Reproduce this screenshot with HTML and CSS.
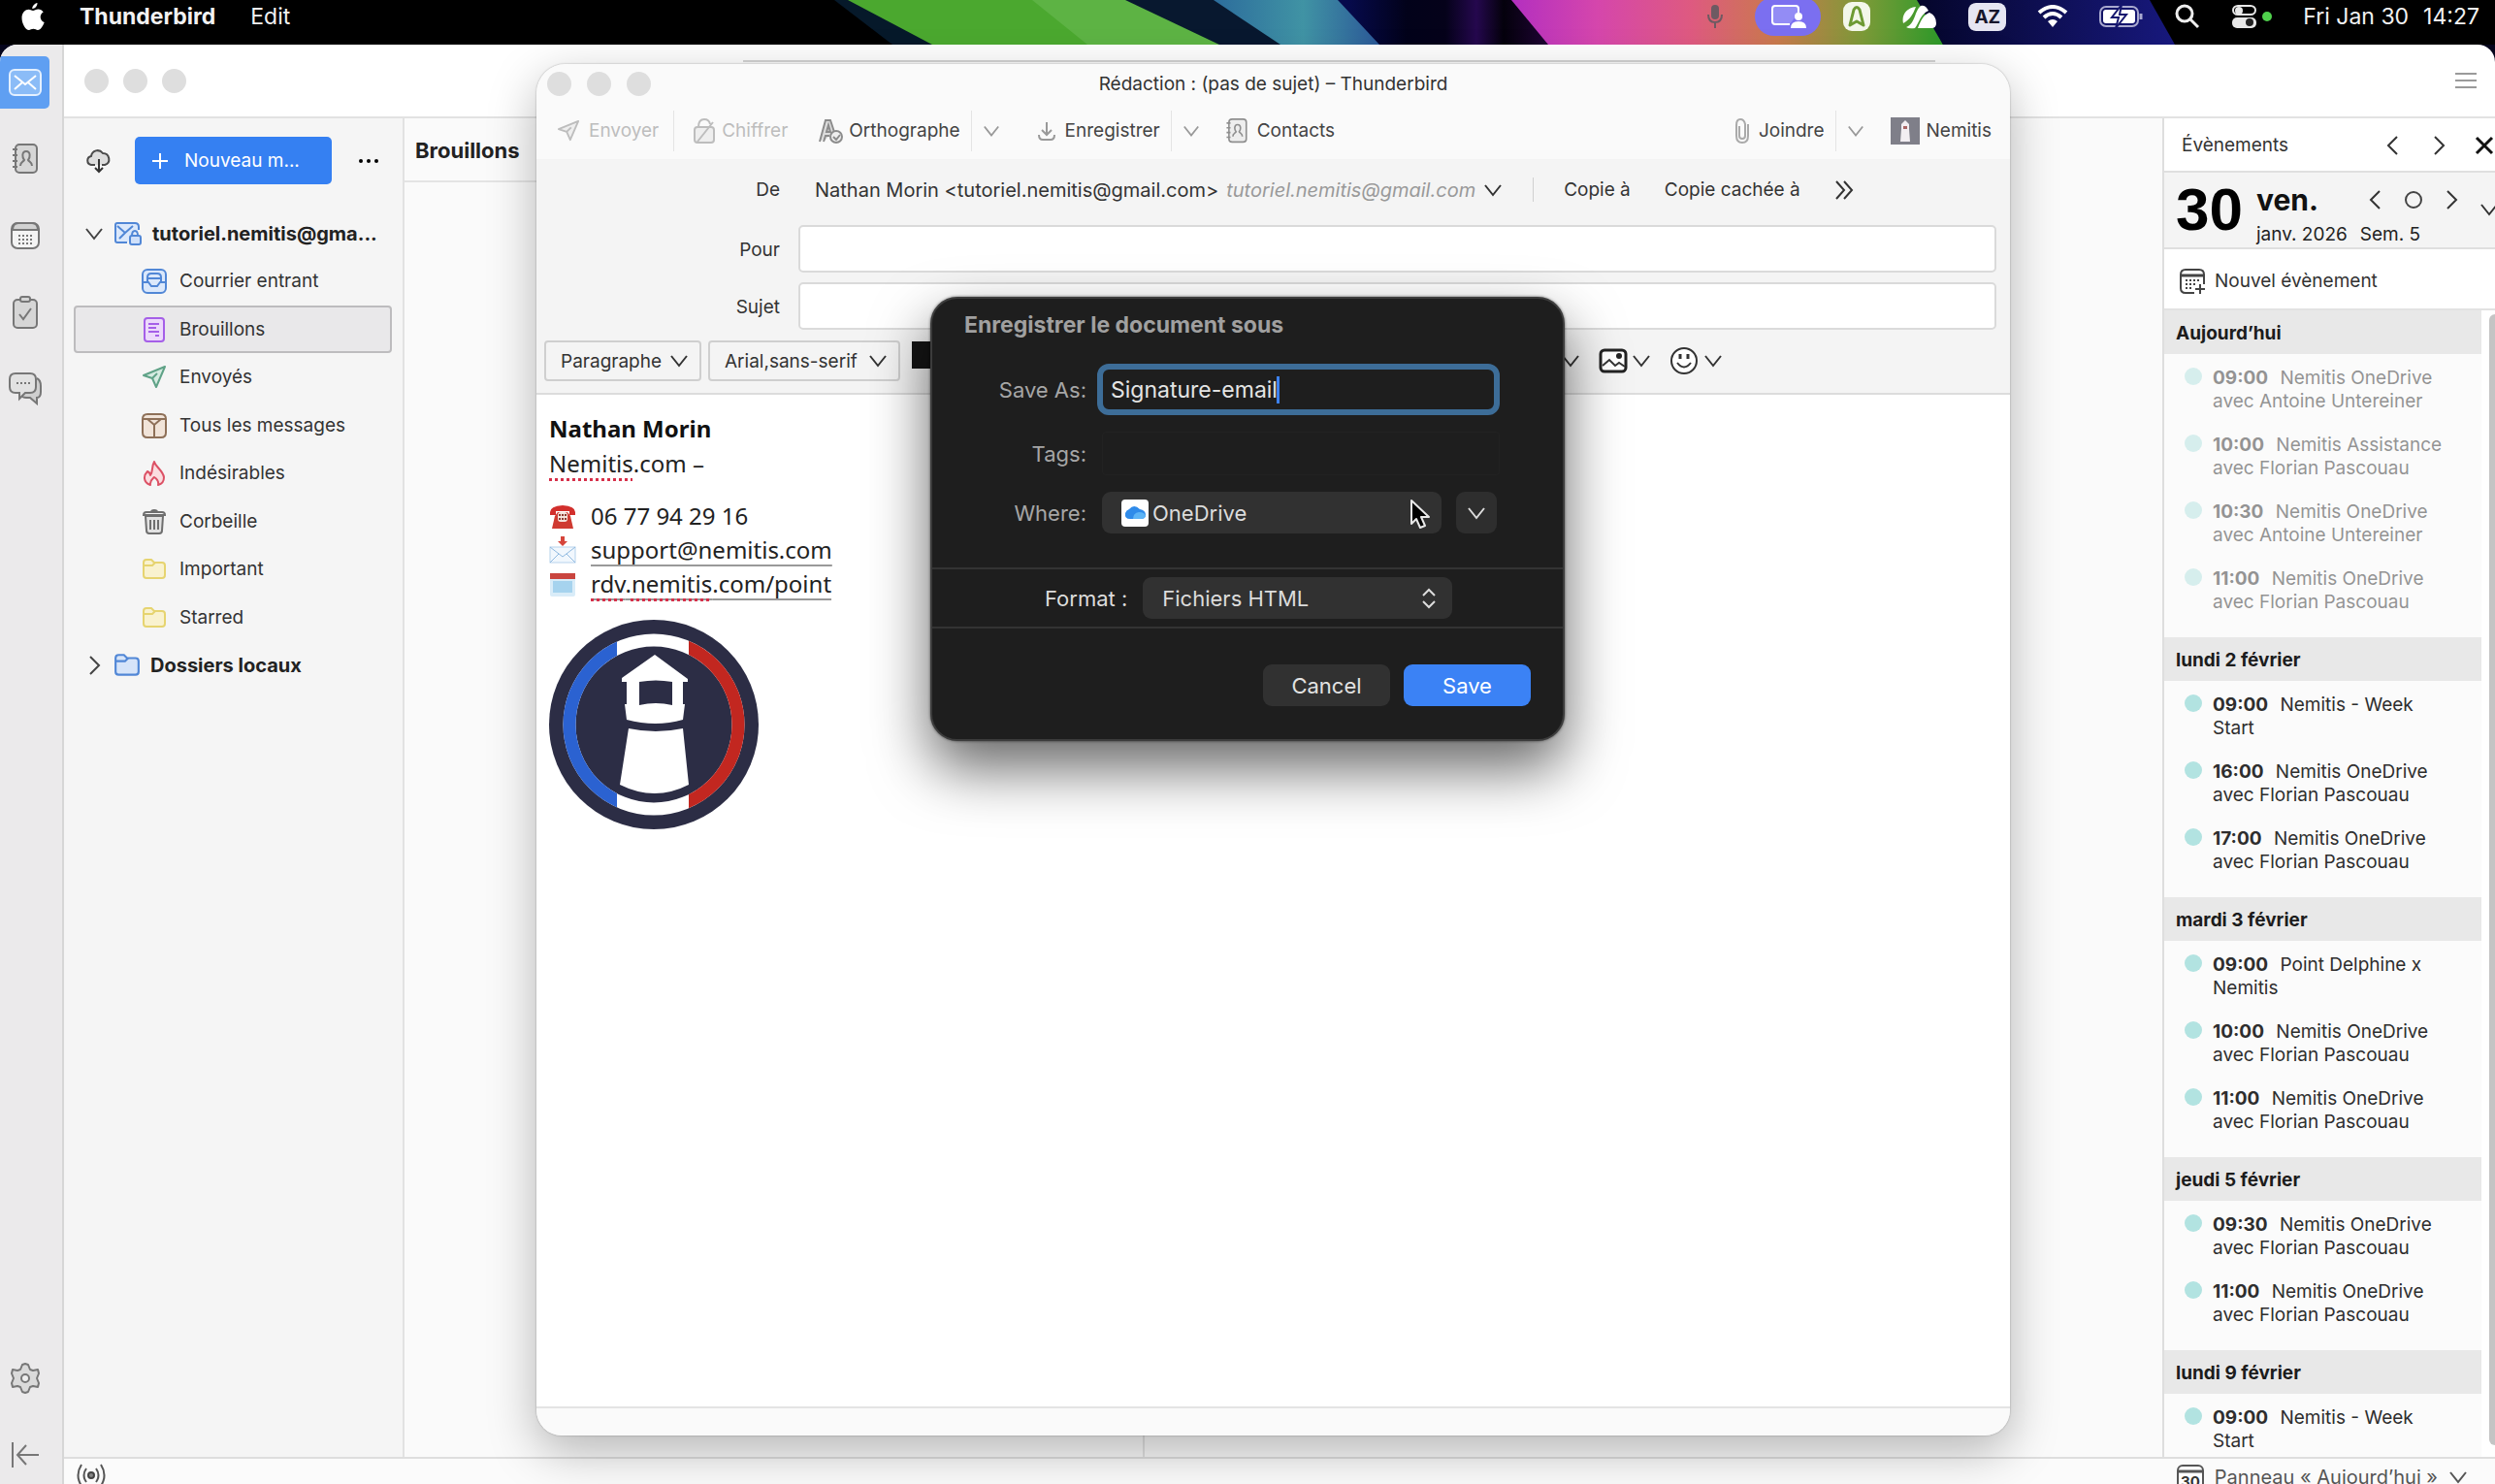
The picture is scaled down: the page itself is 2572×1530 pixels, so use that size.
FILE: index.html
```html
<!DOCTYPE html>
<html lang="fr">
<head>
<meta charset="utf-8">
<title>Rédaction : (pas de sujet) – Thunderbird</title>
<link rel="stylesheet" href="styles.css">
</head>
<body>
<svg class="sprite" aria-hidden="true">
  <symbol id="chev-down" viewBox="0 0 20 20"><path d="M2 5l8 10 8-10" fill="none" stroke="currentColor" stroke-width="2"/></symbol>
  <symbol id="chev-left" viewBox="0 0 20 20"><path d="M14 1L5 10l9 9" fill="none" stroke="currentColor" stroke-width="2"/></symbol>
  <symbol id="chev-right" viewBox="0 0 20 20"><path d="M6 1l9 9-9 9" fill="none" stroke="currentColor" stroke-width="2"/></symbol>
  <symbol id="plane" viewBox="0 0 26 26"><path d="M24 2L2 11l9 3 4 9z" fill="var(--fill)" stroke="currentColor" stroke-width="2" stroke-linejoin="round"/><path d="M11 14l5-5" fill="none" stroke="currentColor" stroke-width="2"/></symbol>
  <symbol id="folder" viewBox="0 0 26 26"><path d="M2 6q0-3 3-3h5l3 3h8q3 0 3 3v10q0 3-3 3H5q-3 0-3-3z" fill="var(--fill)" stroke="currentColor" stroke-width="2"/><path d="M2 9h9l3-3" fill="none" stroke="currentColor" stroke-width="2"/></symbol>
  <symbol id="contact" viewBox="0 0 28 32"><rect x="4" y="1" width="22" height="29" rx="4" fill="var(--fill)" stroke="currentColor" stroke-width="2"/><path d="M1 6h5M1 12h5M1 18h5M1 24h5M9 23c0-4 3-4 4-6-2-2-3-9 2-9s4 7 2 9c1 2 4 2 4 6" fill="none" stroke="currentColor" stroke-width="2"/></symbol>
</svg>

<header class="menubar">
  <svg class="wallpaper" viewBox="0 0 2572 46" preserveAspectRatio="none" aria-hidden="true">
    <defs>
      <linearGradient id="pink" x1="1558" x2="2000" y1="0" y2="0" gradientUnits="userSpaceOnUse">
        <stop offset="0" stop-color="#b32fc0"/><stop offset=".2" stop-color="#d546ac"/><stop offset=".42" stop-color="#de5a80"/><stop offset=".62" stop-color="#c97a4c"/><stop offset=".82" stop-color="#7c9a38"/><stop offset="1" stop-color="#2f9a2a"/>
      </linearGradient>
      <linearGradient id="purple" x1="1390" x2="1590" y1="0" y2="0" gradientUnits="userSpaceOnUse">
        <stop offset="0" stop-color="#060a4c"/><stop offset=".3" stop-color="#02021a"/><stop offset=".5" stop-color="#05021a"/><stop offset=".66" stop-color="#25084e"/><stop offset=".8" stop-color="#04010c"/><stop offset="1" stop-color="#1c0430"/>
      </linearGradient>
      <linearGradient id="teal" x1="1250" x2="1420" y1="0" y2="0" gradientUnits="userSpaceOnUse">
        <stop offset="0" stop-color="#2c6c9c"/><stop offset=".55" stop-color="#4093a4"/><stop offset="1" stop-color="#2c5a98"/>
      </linearGradient>
      <linearGradient id="navy" x1="1980" x2="2240" y1="0" y2="0" gradientUnits="userSpaceOnUse">
        <stop offset="0" stop-color="#05062c"/><stop offset="1" stop-color="#17187c"/>
      </linearGradient>
    </defs>
    <rect width="2572" height="46" fill="#000"/>
    <path d="M860 0h20l90 46h-50z" fill="#06192a"/>
    <path d="M874 0h290l96 46H961z" fill="#4ba82f"/>
    <path d="M1064 0h98l95 46h-136z" fill="#5db344"/>
    <path d="M1160 0h95l70 46h-68z" fill="#08182f"/>
    <path d="M1251 0h130l42 46h-103z" fill="url(#teal)"/>
    <path d="M1379 0h182l38 46h-177z" fill="url(#purple)"/>
    <path d="M1558 0h422l23 46h-407z" fill="url(#pink)"/>
    <path d="M1976 0h240l26 46h-239z" fill="url(#navy)"/>
  </svg>
  <nav class="menubar-left">
    <svg class="apple" viewBox="0 0 24 28"><path d="M16.500 0c.2 3-2.600 6-5.200 6C11 3.500 13.600.5 16.500 0zM12 8c1.300 0 3-1.500 5.500-1.500 2 0 4 1.100 5.200 2.900-4.500 2.600-3.800 8.700 1 10.600C22.500 23.500 19.800 28 17 28c-1.800 0-2.500-1.200-4.600-1.200S9.500 28 7.800 28C4.500 28 .5 21.500.5 15.500c0-6 3.800-8.800 7-8.800 2 0 3.500 1.300 4.500 1.300z" fill="#fff"/></svg>
    <b>Thunderbird</b>
    <span>Edit</span>
  </nav>
  <div class="menubar-right">
    <svg width="18" height="26" viewBox="0 0 18 26"><rect x="5" y="1" width="8" height="15" rx="4" fill="#6d5a62"/><path d="M2 11q0 8 7 8t7-8M9 19v6" fill="none" stroke="#6d5a62" stroke-width="2"/></svg>
    <span class="share-pill"><svg width="38" height="28" viewBox="0 0 38 28"><path d="M21 22H6q-3 0-3-3V6q0-3 3-3h21q3 0 3 3v4" fill="#938cf5" stroke="#fff" stroke-width="2"/><circle cx="30" cy="14" r="4" fill="#fff"/><path d="M22 26q0-7 8-7t8 7z" fill="#fff"/></svg></span>
    <svg width="30" height="30" viewBox="0 0 30 30"><rect x="1" y="0" width="28" height="30" rx="9" fill="#f3f7ea"/><path d="M8 24l4-16q3-5 6 0l4 16-7-4z" fill="none" stroke="#6d9a33" stroke-width="3" stroke-linejoin="round"/></svg>
    <svg width="36" height="26" viewBox="0 0 36 26"><path d="M1 20C-1 12 4 4 14 3 11 11 8 16 1 20zM4 24C14 20 12 8 19 2q5-1 8 5C19 10 17 20 13 25q-6 1-9-1zM16 25c3-8 6-14 12-16q7 3 7 11 0 5-5 5z" fill="#fff"/></svg>
    <span class="az">AZ</span>
    <svg width="32" height="24" viewBox="0 0 32 24"><path d="M2 8q14-12 28 0M7 13q9-8 18 0" fill="none" stroke="#fff" stroke-width="4"/><path d="M11 17q5-4 10 0l-5 6z" fill="#fff"/></svg>
    <svg width="46" height="24" viewBox="0 0 46 24"><rect x="1" y="2" width="39" height="20" rx="6" fill="none" stroke="#a9a9cf" stroke-width="2"/><rect x="4" y="5" width="33" height="14" rx="3" fill="#fff"/><path d="M23 0L13 13h7l-3 11 11-14h-7z" fill="#fff" stroke="#15166e" stroke-width="2"/><path d="M43 9v6" stroke="#a9a9cf" stroke-width="3"/></svg>
    <svg width="26" height="26" viewBox="0 0 26 26"><circle cx="10" cy="10" r="8" fill="none" stroke="#eee" stroke-width="3"/><path d="M16 16l8 8" stroke="#eee" stroke-width="3"/></svg>
    <svg width="42" height="26" viewBox="0 0 42 26"><rect x="2" y="2" width="23" height="9" rx="5" fill="none" stroke="#e8e8e8" stroke-width="2"/><circle cx="8" cy="7" r="4" fill="#e8e8e8"/><rect x="1" y="14" width="25" height="11" rx="5" fill="#e8e8e8"/><circle cx="19" cy="19" r="4" fill="#222"/><circle cx="37" cy="13" r="5" fill="#4fd04c"/></svg>
    <time class="clock"><span>Fri Jan 30</span><span>14:27</span></time>
  </div>
</header>

<main class="mail">
  <nav class="rail">
    <button class="rail-btn active" aria-label="Courrier"><svg width="34" height="28" viewBox="0 0 34 28"><rect x="1" y="1" width="32" height="26" rx="5" fill="#8bbcf7" stroke="#e4f0ff" stroke-width="2"/><path d="M6 7l11 9L28 7M6 21l8-7M28 21l-8-7" fill="none" stroke="#fff" stroke-width="2"/></svg></button>
    <button class="rail-btn" aria-label="Carnet d’adresses"><svg width="28" height="32"><use href="#contact"/></svg></button>
    <button class="rail-btn" aria-label="Agenda"><svg width="30" height="30" viewBox="0 0 30 30"><rect x="1" y="2" width="28" height="26" rx="6" fill="#f4f4f4" stroke="currentColor" stroke-width="2"/><path d="M2 9q0-7 6-7h14q6 0 6 7z" fill="#d2d2d2" stroke="currentColor" stroke-width="2"/><path d="M8 15h15M8 19h15M8 23h15" stroke="currentColor" stroke-width="2" stroke-dasharray="2 2"/></svg></button>
    <button class="rail-btn" aria-label="Tâches"><svg width="26" height="34" viewBox="0 0 26 34"><rect x="1" y="4" width="24" height="29" rx="4" fill="#d6d6d6" stroke="currentColor" stroke-width="2"/><rect x="8" y="1" width="10" height="5" rx="2" fill="#d6d6d6" stroke="currentColor" stroke-width="2"/><path d="M7 19l4 5 8-11" fill="none" stroke="currentColor" stroke-width="2"/></svg></button>
    <button class="rail-btn" aria-label="Messagerie instantanée"><svg width="34" height="34" viewBox="0 0 34 34"><path d="M29 6q4 2 4 8v6q0 6-4 6v6l-7-6h-4q-4 0-6-3" fill="#cfcfcf" stroke="currentColor" stroke-width="2"/><path d="M7 1h15q6 0 6 6v8q0 6-6 6h-5l-6 6v-6H7q-6 0-6-6V7q0-6 6-6z" fill="#e2e2e2" stroke="currentColor" stroke-width="2"/><path d="M8 11h14" stroke="currentColor" stroke-width="2" stroke-dasharray="2 2"/></svg></button>
    <span class="grow"></span>
    <button class="rail-btn" aria-label="Paramètres"><svg width="30" height="32" viewBox="0 0 30 32"><path d="M15 1l3 1 2 5 3 1 5-1 1 4-2 5 2 5-1 4-5-1-3 1-2 5-3 1-3-1-2-5-3-1-5 1-1-4 2-5-2-5 1-4 5 1 3-1 2-5z" fill="#dadada" stroke="currentColor" stroke-width="2" stroke-linejoin="round"/><circle cx="15" cy="16" r="4" fill="#eee" stroke="currentColor" stroke-width="2"/></svg></button>
    <button class="rail-btn" aria-label="Réduire"><svg width="30" height="28" viewBox="0 0 30 28"><path d="M2 1v26M29 14H7M16 4L7 14l9 10" fill="none" stroke="currentColor" stroke-width="2"/></svg></button>
  </nav>

  <div class="titlebar">
    <span class="light"></span><span class="light"></span><span class="light"></span>
    <span class="grow"></span>
    <button class="plain burger" aria-label="Menu"><svg width="22" height="18" viewBox="0 0 22 18"><path d="M0 2h22M0 9h22M0 16h22" stroke="#9a9a9a" stroke-width="2"/></svg></button>
  </div>

  <aside class="folders">
    <div class="folder-top">
      <button class="plain" aria-label="Relever"><svg width="26" height="26" viewBox="0 0 26 26"><path d="M9 17H5c-5-1-5-8 0-9 1-6 8-8 12-3 7 0 9 10 2 12h-3" fill="#ddd" stroke="#4a4a4a" stroke-width="2"/><path d="M13 11v13M9 20l4 4 4-4" fill="none" stroke="#333" stroke-width="2"/></svg></button>
      <button class="new-msg"><svg width="18" height="18" viewBox="0 0 18 18"><path d="M9 1v16M1 9h16" stroke="#fff" stroke-width="2"/></svg>Nouveau m...</button>
      <button class="plain dots" aria-label="Options"><svg width="20" height="4" viewBox="0 0 20 4"><circle cx="2" cy="2" r="2"/><circle cx="10" cy="2" r="2"/><circle cx="18" cy="2" r="2"/></svg></button>
    </div>
    <ul class="tree">
      <li class="row root"><svg class="twist" width="20" height="20"><use href="#chev-down"/></svg><svg class="blue" width="30" height="26" viewBox="0 0 30 26"><path d="M14 22H4q-2 0-2-2V4q0-2 2-2h18q4 0 4 4v3" fill="#dbe8fb" stroke="currentColor" stroke-width="2"/><path d="M4 5l8 7-6 6M12 12l8-7" fill="none" stroke="currentColor" stroke-width="2"/><rect x="17" y="15" width="11" height="9" rx="2" fill="#cfe0fa" stroke="currentColor" stroke-width="2"/><path d="M19 15q0-5 3-5t3 5" fill="none" stroke="currentColor" stroke-width="2"/></svg>tutoriel.nemitis@gma...</li>
      <li class="row"><svg class="blue" width="26" height="26" viewBox="0 0 26 26"><rect x="1" y="1" width="24" height="24" rx="5" fill="#dbe8fb" stroke="currentColor" stroke-width="2"/><path d="M2 14h5l3 4h6l3-4h5M6 13V9q0-4 4-4h6q4 0 4 4v4M7 10h12" fill="none" stroke="currentColor" stroke-width="2"/></svg>Courrier entrant</li>
      <li class="row selected"><svg class="violet" width="26" height="26" viewBox="0 0 26 26"><rect x="3" y="1" width="20" height="24" rx="3" fill="#ecd9fb" stroke="currentColor" stroke-width="2"/><path d="M7 7h11M7 11h8M7 15h11M14 19h4" stroke="currentColor" stroke-width="2"/></svg>Brouillons</li>
      <li class="row"><svg class="green" width="26" height="26"><use href="#plane"/></svg>Envoyés</li>
      <li class="row"><svg class="brown" width="26" height="26" viewBox="0 0 26 26"><path d="M1 6q0-5 5-5h14q5 0 5 5v14q0 5-5 5H6q-5 0-5-5z" fill="#f1e4d9" stroke="currentColor" stroke-width="2"/><path d="M2 6h22M6 6l7 6 7-6M13 12v12" fill="none" stroke="currentColor" stroke-width="2"/></svg>Tous les messages</li>
      <li class="row"><svg class="red" width="26" height="26" viewBox="0 0 26 26"><path d="M9 25c-8-3-7-10-3-14 2 1 3 2 3 4 3-4 1-9 4-14 1 5 9 9 10 16 0 4-2 7-6 8 1-4-1-6-4-8-2 2-5 4-4 8z" fill="#fbdde0" stroke="currentColor" stroke-width="2" stroke-linejoin="round"/></svg>Indésirables</li>
      <li class="row"><svg class="grey" width="26" height="26" viewBox="0 0 26 26"><path d="M4 7l1 15q0 3 3 3h10q3 0 3-3l1-15z" fill="#e2e2e2" stroke="currentColor" stroke-width="2"/><path d="M2 6q0-3 3-3h16q3 0 3 3zM10 3q0-2 3-2t3 2M9 11v10M13 11v10M17 11v10" fill="none" stroke="currentColor" stroke-width="2"/></svg>Corbeille</li>
      <li class="row"><svg class="yellow" width="26" height="26"><use href="#folder"/></svg>Important</li>
      <li class="row"><svg class="yellow" width="26" height="26"><use href="#folder"/></svg>Starred</li>
      <li class="row root"><svg class="twist" width="20" height="20"><use href="#chev-right"/></svg><svg class="blue local" width="28" height="28"><use href="#folder"/></svg>Dossiers locaux</li>
    </ul>
  </aside>

  <section class="thread">
    <div class="thread-list"><h2>Brouillons</h2></div>
    <div class="preview"></div>
  </section>

  <aside class="today">
    <div class="today-head">
      <span class="grow">Évènements</span>
      <button class="plain" aria-label="Précédent"><svg width="20" height="20"><use href="#chev-left"/></svg></button>
      <button class="plain" aria-label="Suivant"><svg width="20" height="20"><use href="#chev-right"/></svg></button>
      <button class="plain" aria-label="Fermer"><svg width="20" height="20" viewBox="0 0 20 20"><path d="M2 2l16 16M18 2L2 18" stroke="#111" stroke-width="3"/></svg></button>
    </div>
    <div class="today-date">
      <span class="day-num">30</span>
      <div class="day-info">
        <div class="day-line"><b class="grow">ven.</b>
          <button class="plain" aria-label="Jour précédent"><svg width="20" height="20"><use href="#chev-left"/></svg></button>
          <button class="plain" aria-label="Aujourd’hui"><svg width="20" height="20" viewBox="0 0 20 20"><circle cx="10" cy="10" r="8" fill="none" stroke="#444" stroke-width="2"/></svg></button>
          <button class="plain" aria-label="Jour suivant"><svg width="20" height="20"><use href="#chev-right"/></svg></button>
          <button class="plain mini" aria-label="Mini-mois"><svg width="20" height="20"><use href="#chev-down"/></svg></button>
        </div>
        <div class="week"><span>janv. 2026</span><span>Sem. 5</span></div>
      </div>
    </div>
    <button class="new-event"><svg width="26" height="28" viewBox="0 0 26 28"><path d="M15 26H6q-5 0-5-5V7q0-5 5-5h14q5 0 5 5v10" fill="none" stroke="#444" stroke-width="2"/><path d="M2 8h23" stroke="#444" stroke-width="3"/><path d="M6 13h14M6 17h10M6 21h8" stroke="#444" stroke-width="2" stroke-dasharray="2 2"/><path d="M21 17v10M16 22h10" stroke="#444" stroke-width="2"/></svg>Nouvel évènement</button>
    <div class="agenda">
      <div class="agenda-list">
        <h3>Aujourd’hui</h3>
        <ul class="past">
          <li><b>09:00</b> Nemitis OneDrive avec Antoine Untereiner</li>
          <li><b>10:00</b> Nemitis Assistance avec Florian Pascouau</li>
          <li><b>10:30</b> Nemitis OneDrive avec Antoine Untereiner</li>
          <li><b>11:00</b> Nemitis OneDrive avec Florian Pascouau</li>
        </ul>
        <h3>lundi 2 février</h3>
        <ul>
          <li><b>09:00</b> Nemitis - Week<br>Start</li>
          <li><b>16:00</b> Nemitis OneDrive avec Florian Pascouau</li>
          <li><b>17:00</b> Nemitis OneDrive avec Florian Pascouau</li>
        </ul>
        <h3>mardi 3 février</h3>
        <ul>
          <li><b>09:00</b> Point Delphine x Nemitis</li>
          <li><b>10:00</b> Nemitis OneDrive avec Florian Pascouau</li>
          <li><b>11:00</b> Nemitis OneDrive avec Florian Pascouau</li>
        </ul>
        <h3>jeudi 5 février</h3>
        <ul>
          <li><b>09:30</b> Nemitis OneDrive avec Florian Pascouau</li>
          <li><b>11:00</b> Nemitis OneDrive avec Florian Pascouau</li>
        </ul>
        <h3>lundi 9 février</h3>
        <ul>
          <li><b>09:00</b> Nemitis - Week<br>Start</li>
        </ul>
      </div>
      <div class="scroll-thumb"></div>
    </div>
  </aside>

  <footer class="status">
    <svg width="30" height="26" viewBox="0 0 30 26"><circle cx="15" cy="13" r="3" fill="#888" stroke="#444" stroke-width="2"/><path d="M10 6q-5 7 0 14M20 6q5 7 0 14M5 2q-7 11 0 22M25 2q7 11 0 22" fill="none" stroke="#555" stroke-width="2"/></svg>
    <span class="grow"></span>
    <button class="plain today-toggle"><svg width="28" height="28" viewBox="0 0 28 28"><rect x="1" y="1" width="26" height="30" rx="5" fill="#fff" stroke="#555" stroke-width="2"/><path d="M2 7h24" stroke="#555" stroke-width="3"/><text x="14" y="23" text-anchor="middle" class="icon-num">30</text></svg>Panneau « Aujourd’hui »<svg width="20" height="20"><use href="#chev-down"/></svg></button>
  </footer>
</main>

<div class="search-edge"></div>

<section class="compose">
  <div class="compose-top">
    <div class="compose-title">
      <div class="lights"><span class="light"></span><span class="light"></span><span class="light"></span></div>
      <h1>Rédaction : (pas de sujet) – Thunderbird</h1>
    </div>
    <div class="toolbar">
      <button class="tool off"><svg width="24" height="26"><use href="#plane"/></svg>Envoyer</button>
      <i class="sep"></i>
      <button class="tool off chiffrer"><svg width="24" height="26" viewBox="0 0 24 26"><rect x="2" y="9" width="20" height="16" rx="3" fill="#eee" stroke="currentColor" stroke-width="2"/><path d="M6 9q0-8 6-8 5 0 6 5M5 24L21 4" fill="none" stroke="currentColor" stroke-width="2"/></svg>Chiffrer</button>
      <button class="tool ortho"><svg width="26" height="26" viewBox="0 0 26 26"><path d="M1 24L7 2h5l4 12M5 24l2-6h4M8 14l2-7 2 7z" fill="#ddd" stroke="#8c8c8c" stroke-width="2"/><circle cx="18" cy="19" r="6" fill="#eee" stroke="#8c8c8c" stroke-width="2"/><path d="M15 19l3 3 4-5" fill="none" stroke="#8c8c8c" stroke-width="2"/></svg>Orthographe</button>
      <i class="sep"></i>
      <button class="tool chev" aria-label="Langues"><svg width="18" height="18"><use href="#chev-down"/></svg></button>
      <button class="tool"><svg width="20" height="20" viewBox="0 0 20 20"><path d="M10 1v13M5 9l5 5 5-5M2 14q0 5 4 5h8q4 0 4-5" fill="none" stroke="#999" stroke-width="2"/></svg>Enregistrer</button>
      <i class="sep"></i>
      <button class="tool chev" aria-label="Options d’enregistrement"><svg width="18" height="18"><use href="#chev-down"/></svg></button>
      <button class="tool contacts"><svg width="24" height="26"><use href="#contact"/></svg>Contacts</button>
      <span class="grow"></span>
      <button class="tool"><svg width="16" height="26" viewBox="0 0 16 26"><path d="M14 6v12q0 7-6 7t-6-7V7q0-6 4-6t5 5v12q0 3-3 3t-3-3V8" fill="none" stroke="#aaa" stroke-width="2"/></svg>Joindre</button>
      <i class="sep"></i>
      <button class="tool chev" aria-label="Options de pièce jointe"><svg width="18" height="18"><use href="#chev-down"/></svg></button>
      <button class="tool nemitis"><svg width="30" height="28" viewBox="0 0 30 28"><rect width="30" height="28" fill="#7f7f89"/><path d="M11 7l4-4 4 4v5l1 13H10l1-13z" fill="#f2eef2"/><path d="M13 9h4v3h-4z" fill="#a66"/></svg>Nemitis</button>
    </div>
  </div>

  <form class="fields">
    <span class="lab">De</span>
    <div class="from-row">
      <button type="button" class="from">Nathan Morin &lt;tutoriel.nemitis@gmail.com&gt; <em>tutoriel.nemitis@gmail.com</em><svg width="20" height="20"><use href="#chev-down"/></svg></button>
      <i class="sep"></i>
      <button type="button" class="plain">Copie à</button>
      <button type="button" class="plain">Copie cachée à</button>
      <button type="button" class="plain" aria-label="Plus"><svg width="20" height="20" viewBox="0 0 20 20"><path d="M2 1l8 9-8 9M10 1l8 9-8 9" fill="none" stroke="#333" stroke-width="2"/></svg></button>
    </div>
    <label class="lab" for="to">Pour</label><input id="to" class="field" type="text">
    <label class="lab" for="subject">Sujet</label><input id="subject" class="field" type="text">
  </form>

  <div class="format">
    <span class="pick para"><select aria-label="Style"><option>Paragraphe</option></select><svg width="20" height="20"><use href="#chev-down"/></svg></span>
    <span class="pick font"><select aria-label="Police"><option>Arial,sans-serif</option></select><svg width="20" height="20"><use href="#chev-down"/></svg></span>
    <span class="swatch"></span>
    <span class="grow"></span>
    <span class="tail">
      <svg width="20" height="20"><use href="#chev-down"/></svg>
      <svg class="pic" width="30" height="26" viewBox="0 0 30 26"><rect x="2" y="2" width="26" height="22" rx="4" fill="#fff" stroke="#222" stroke-width="3"/><path d="M4 18l7-6 6 6 4-3 6 4" fill="none" stroke="#333" stroke-width="2"/><circle cx="21" cy="8" r="3" fill="#222"/></svg>
      <svg width="20" height="20"><use href="#chev-down"/></svg>
      <svg class="smile" width="30" height="30" viewBox="0 0 30 30"><circle cx="15" cy="15" r="13" fill="#fff" stroke="#333" stroke-width="2"/><path d="M11 8v5M19 8v5" stroke="#333" stroke-width="3"/><path d="M8 17q7 9 14 0" fill="none" stroke="#333" stroke-width="2"/></svg>
      <svg width="20" height="20"><use href="#chev-down"/></svg>
    </span>
  </div>

  <article class="editor">
    <p><b>Nathan Morin</b></p>
    <p class="org"><span class="spell">Nemitis</span>.com –</p>
    <div class="coords">
      <svg width="28" height="26" viewBox="0 0 28 26"><path d="M1 8q0-6 13-7 13 1 13 7v3h-6V7H7v4H1z" fill="#d22f2c"/><path d="M6 12l3-4h10l3 4 3 13H3z" fill="#cf3a31"/><rect x="9" y="8" width="10" height="10" rx="3" fill="#f3e3dc"/><path d="M10 11h8M10 15h8" stroke="#8c3a30" stroke-width="2" stroke-dasharray="2 1"/></svg><span>06 77 94 29 16</span>
      <svg width="28" height="28" viewBox="0 0 28 28"><rect x="1" y="11" width="26" height="16" fill="#f1f7fd" stroke="#b7d3ec" stroke-width="1"/><path d="M1 11l13 10 13-10M1 27l9-9M27 27l-9-9" fill="none" stroke="#8fb9e0" stroke-width="1"/><path d="M12 0h4v5h3l-5 5-5-5h3z" fill="#d6453b"/></svg><a href="#mail">support@nemitis.com</a>
      <svg width="28" height="26" viewBox="0 0 28 26"><rect x="1" y="2" width="26" height="23" rx="2" fill="#d9ecf8"/><path d="M4 9h20v12H4z" fill="#a6d3ee"/><rect x="1" y="1" width="26" height="6" fill="#c9453f"/></svg><a href="#rdv"><span class="spell">rdv</span>.<span class="spell">nemitis</span>.com/point</a>
    </div>
    <svg class="logo" viewBox="0 0 216 216" role="img" aria-label="Nemitis">
      <defs><clipPath id="lft"><path d="M0 0h70v216H0z"/></clipPath><clipPath id="rgt"><path d="M144 0h72v216h-72z"/></clipPath></defs>
      <circle cx="108" cy="108" r="108" fill="#2c2d45"/>
      <circle cx="108" cy="108" r="87" fill="none" stroke="#fff" stroke-width="13"/>
      <circle cx="108" cy="108" r="87" fill="none" stroke="#2b62d1" stroke-width="13" clip-path="url(#lft)"/>
      <circle cx="108" cy="108" r="87" fill="none" stroke="#c22720" stroke-width="13" clip-path="url(#rgt)"/>
      <path d="M109 36l34 25v3h-5v23h2l-2 16q-28 8-58 0l-2-16h2V64h-5v-4zM93 64v24q17-4 34 0V64q-17-3-34 0z" fill="#fff" fill-rule="evenodd"/>
      <path d="M82 112q28 6 56 0l6 58q-35 18-71 0z" fill="#fff"/>
    </svg>
  </article>
  <div class="compose-foot"></div>
</section>

<form class="dialog" aria-label="Enregistrer le document sous">
  <h2>Enregistrer le document sous</h2>
  <div class="dlg-grid">
    <label for="name">Save As:</label>
    <div class="name-box"><input id="name" type="text" value="Signature-email"><i class="caret"></i></div>
    <label for="tags">Tags:</label>
    <input id="tags" class="tags" type="text">
    <label for="where">Where:</label>
    <div class="where-row">
      <span class="dark-pick"><svg class="cloud" width="28" height="28" viewBox="0 0 28 28"><rect width="28" height="28" rx="4" fill="#fff"/><path d="M9 20q-6 0-5-6 1-3 4-4 5-6 11 0 6 1 6 6 0 4-5 4z" fill="#2f8bea"/><path d="M12 20q0-6 6-7 6 0 7 4-1 3-5 3z" fill="#5db4f6"/></svg><select id="where"><option>OneDrive</option></select></span>
      <button type="button" class="expand" aria-label="Développer"><svg width="22" height="20"><use href="#chev-down"/></svg></button>
    </div>
  </div>
  <div class="dlg-format">
    <label for="fmt">Format :</label>
    <span class="dark-pick fmt"><select id="fmt"><option>Fichiers HTML</option></select><svg width="16" height="22" viewBox="0 0 16 22"><path d="M2 8l6-6 6 6M2 14l6 6 6-6" fill="none" stroke="#ddd" stroke-width="2"/></svg></span>
  </div>
  <div class="dlg-actions">
    <button type="button" class="dbtn">Cancel</button>
    <button type="button" class="dbtn primary">Save</button>
  </div>
  <svg class="pointer" width="22" height="32" viewBox="0 0 22 32"><path d="M2 2v24l5-5 4 9 5-2-4-9h8z" fill="#000" stroke="#e8e8e8" stroke-width="2" stroke-linejoin="round"/></svg>
</form>
</body>
</html>
```
FILE: styles.css
```css
* { box-sizing: border-box; }
html, body { height: 100%; }
body {
  margin: 0;
  display: flex;
  flex-direction: column;
  overflow: hidden;
  position: relative;
  background: #05051c;
  color: #333;
  font: 19px/24px Inter, "Liberation Sans", sans-serif;
}
h1, h2, h3, p, ul { margin: 0; padding: 0; font-size: inherit; }
ul { list-style: none; }
button, input, select { font: inherit; color: inherit; margin: 0; padding: 0; border: 0; background: none; }
select { appearance: none; outline: 0; }
svg { flex: none; display: block; }
.sprite { position: absolute; width: 0; height: 0; }
.grow { flex: 1; }
.plain { display: flex; align-items: center; }
.light { width: 25px; height: 25px; border-radius: 50%; background: #dedede; }
.sep { width: 1px; align-self: stretch; background: #e4e4e4; }

/* System menu bar */
.menubar {
  position: relative;
  flex: none;
  height: 46px;
  display: flex;
  justify-content: space-between;
  align-items: flex-start;
  padding: 0 16px 0 22px;
  color: #f2f2f2;
  font-size: 23px;
  line-height: 34px;
}
.wallpaper { position: absolute; inset: 0; width: 100%; height: 100%; }
.menubar-left, .menubar-right { position: relative; display: flex; align-items: center; height: 34px; }
.menubar-left { gap: 36px; }
.apple { width: 24px; height: 28px; }
.menubar-right { gap: 32px; }
.share-pill { width: 68px; height: 40px; margin-right: -10px; border-radius: 20px; background: #7b6ff0; display: grid; place-items: center; }
.az { width: 39px; height: 29px; border-radius: 8px; background: #e6e6f2; color: #16162c; font-weight: 700; font-size: 19px; line-height: 29px; text-align: center; }
.clock { display: flex; gap: 15px; }

/* Main mail window */
.mail {
  flex: 1;
  min-height: 0;
  display: grid;
  grid-template-columns: 66px 351px 1fr 341px;
  grid-template-rows: 76px 1fr 28px;
  background: #fff;
  border-radius: 18px 18px 0 0;
  overflow: hidden;
}
.rail {
  grid-row: 1 / 4;
  display: flex;
  flex-direction: column;
  gap: 25px;
  padding: 12px 0 3px;
  background: #ebeaeb;
  border-right: 2px solid #d6d6d6;
  color: #777;
  --fill: #d6d6d6;
}
.rail-btn { width: 51px; height: 54px; display: grid; place-items: center; flex: none; }
.rail .grow { margin-bottom: -25px; }
.rail-btn.active { background: #5f9ff2; border-radius: 0 5px 5px 0; }
.titlebar {
  grid-column: 2 / 5;
  display: flex;
  align-items: center;
  gap: 15px;
  padding: 0 19px 0 21px;
  border-bottom: 2px solid #e2e2e2;
}
.folders { background: #f5f5f5; border-right: 2px solid #e2e2e2; min-width: 0; }
.folder-top { display: flex; align-items: center; padding: 19px 0 0 23px; height: 68px; }
.new-msg {
  width: 203px; height: 49px; margin-left: 24px; padding-left: 17px;
  display: flex; align-items: center; gap: 16px;
  background: #3580f2; color: #fff; border-radius: 5px;
}
.dots { margin-left: 28px; }
.tree { padding: 26px 11px 0 10px; }
.row {
  display: flex; align-items: center; gap: 13px;
  height: 49px; padding-left: 68px;
  border: 2px solid transparent; border-radius: 4px;
  white-space: nowrap;
}
.row:nth-child(even) { height: 50px; }
.row.root { padding-left: 9px; font-weight: 700; font-size: 20px; color: #222; gap: 10px; }
.row .twist { color: #444; }
.row.selected { background: #e9e8ea; border-color: #bdbcbe; }
.blue { color: #5187d6; --fill: #d6e4f9; }
.violet { color: #a55fe8; }
.green { color: #5fa287; --fill: #d5ebe1; }
.brown { color: #8e7058; }
.red { color: #dc5165; }
.grey { color: #6f6f6f; }
.yellow { color: #e6d470; --fill: #f9f2cf; }

.thread { display: grid; grid-template-columns: 763px 1fr; background: #fafafa; border-right: 2px solid #dedede; }
.thread-list { border-right: 2px solid #e2e2e2; }
.thread-list h2 { height: 66px; line-height: 67px; padding-left: 11px; border-bottom: 2px solid #e4e4e4; color: #222; font-size: 22px; }

/* Today pane */
.today { display: flex; flex-direction: column; min-height: 0; min-width: 0; }
.today-head { flex: none; display: flex; align-items: center; gap: 27px; height: 56px; padding: 2px 1px 0 18px; border-bottom: 2px solid #dfdfdf; }
.today-date { flex: none; display: flex; gap: 14px; height: 79px; padding: 0 0 0 12px; background: #f4f4f4; border-bottom: 2px solid #dfdfdf; }
.day-num { font: 700 62px/76px "Liberation Sans", Arial, sans-serif; color: #000; }
.day-info { flex: 1; min-width: 0; display: flex; flex-direction: column; gap: 6px; padding-top: 10px; }
.day-line { display: flex; align-items: center; gap: 19px; height: 36px; }
.day-line b { font-size: 30px; line-height: 36px; color: #111; }
.day-line .mini { margin-right: -4px; padding-top: 20px; }
.week { display: flex; gap: 13px; color: #222; }
.new-event { flex: none; display: flex; align-items: center; gap: 10px; height: 63px; padding: 4px 0 0 16px; border-bottom: 2px solid #e2e2e2; }
.agenda { flex: 1; min-height: 0; display: flex; justify-content: space-between; overflow: hidden; }
.agenda-list { width: 327px; background: #fbfbfb; }
.agenda h3 { height: 45px; line-height: 48px; padding-left: 12px; background: #e8e8e8; color: #1c1c1c; }
.agenda ul { padding-bottom: 16px; }
.agenda li { position: relative; height: 69px; padding: 13px 32px 0 50px; color: #2e2e2e; }
.agenda li::before { content: ""; position: absolute; left: 21px; top: 14px; width: 18px; height: 18px; border-radius: 50%; background: #b2e3e1; }
.agenda b { margin-right: 7px; }
.agenda .past li { opacity: .5; }
.scroll-thumb { width: 6px; margin-top: 4px; margin-bottom: 12px; background: #c4c4c4; border-radius: 6px 0 0 6px; }

.status { grid-column: 2 / 5; display: flex; align-items: flex-start; padding: 4px 28px 0 13px; border-top: 2px solid #dedede; background: #fbfbfb; overflow: hidden; }
.today-toggle { gap: 11px; color: #555; font-size: 20px; }
.today-toggle svg:first-child { margin-top: 2px; }
.icon-num { font: 700 15px Inter, sans-serif; fill: #333; }

/* Compose window */
.search-edge { position: absolute; top: 62px; left: 766px; right: 577px; height: 8px; border-top: 2px solid #d4d4d4; }
.compose {
  position: absolute;
  top: 66px; bottom: 50px; left: 553px; right: 500px;
  display: flex;
  flex-direction: column;
  background: #f4f4f4;
  border-radius: 30px 30px 26px 26px;
  box-shadow: 0 0 2px rgba(0, 0, 0, .35), 0 16px 50px rgba(0, 0, 0, .28);
  overflow: hidden;
}
.compose-top { background: #fafafa; height: 98px; flex: none; padding-top: 8px; }
.compose-title { display: grid; grid-template-columns: 1fr auto 1fr; align-items: center; height: 25px; padding: 0 11px; }
.compose-title::after { content: ""; }
.compose-title h1 { font-weight: 400; line-height: 24px; }
.lights { display: flex; gap: 16px; }
.toolbar { display: flex; align-items: center; height: 42px; margin-top: 15px; padding: 0 19px 0 21px; color: #444; --fill: #eee; }
.tool { display: flex; align-items: center; gap: 9px; flex: none; }
.tool.off { color: #bdbdbd; }
.tool + .sep { margin-left: 11px; }
.tool.off + .sep { margin-left: 15px; }
.tool.chev { margin: 0 38px 0 11px; color: #999; }
.tool.chev:has(+ .contacts) { margin-right: 26px; }
.tool.chev:has(+ .nemitis) { margin-right: 27px; }
.chiffrer { margin-left: 19px; gap: 6px; }
.ortho { margin-left: 32px; gap: 5px; }
.contacts svg { color: #8f8f8f; }
.nemitis { gap: 7px; }

.fields { display: grid; grid-template-columns: 254px 1fr; grid-template-rows: 55px 49px 49px; row-gap: 10px; padding: 3px 14px 0 0; flex: none; }
.fields .lab { text-align: right; padding: 3px 3px 0 0; align-self: center; }
.from-row { display: flex; align-items: center; padding: 2px 0 0 33px; }
.from { display: flex; align-items: center; gap: 8px; font-size: 20px; }
.from em { color: #999; }
.from-row .sep { height: 25px; align-self: center; margin: 0 31px; background: #d0d0d0; }
.from-row .plain { margin-right: 35px; }
.field { height: 49px; margin-left: 16px; background: #fff; border: 2px solid #dadada; border-radius: 5px; }

.format { flex: none; display: flex; align-items: center; height: 67px; padding: 0 296px 2px 8px; border-bottom: 2px solid #dcdcdc; }
.pick { position: relative; display: flex; align-items: center; height: 42px; border: 2px solid #cfcfcf; border-radius: 4px; margin-right: 7px; flex: none; }
.pick select { width: 100%; height: 100%; padding: 2px 0 0 15px; }
.pick svg { position: absolute; right: 11px; pointer-events: none; }
.para { width: 162px; }
.font { width: 198px; }
.swatch { width: 30px; height: 28px; margin-left: 5px; margin-bottom: 12px; background: #151515; }
.tail { display: flex; align-items: center; }
.pic { margin-left: 19px; }
.pic + svg { margin-left: 4px; }
.smile { margin: 0 5px 0 19px; }

.editor { flex: 1; min-height: 0; background: #fff; padding: 17px 13px; color: #111; font: 24px/36px "Noto Sans", "Open Sans", sans-serif; }
.org { color: #222; }
.spell { text-decoration: underline dotted #d6304a 3px; text-underline-offset: 6px; }
.coords { display: grid; grid-template-columns: 28px 1fr; column-gap: 15px; align-items: center; justify-items: start; margin-top: 18px; line-height: 35px; color: #222; }
.coords svg { align-self: end; margin-bottom: 3px; }
.coords a { color: inherit; text-decoration: underline #999 2px; text-underline-offset: 6px; }
.logo { width: 216px; height: 216px; margin-top: 20px; }
.compose-foot { flex: none; height: 30px; background: #fafafa; border-top: 2px solid #e4e4e4; }

/* Save dialog */
.dialog {
  position: absolute;
  top: 306px; left: 50%;
  width: 654px;
  margin-left: -327px;
  padding-top: 13px;
  background: #1e1e1e;
  border-radius: 28px;
  border: 2px solid #3c3c3c;
  box-shadow: 0 0 3px rgba(0, 0, 0, .6), 0 28px 60px rgba(0, 0, 0, .6);
  color: #dcdcdc;
  font-size: 22px;
  line-height: 28px;
}
.dialog h2 { padding-left: 33px; font-weight: 700; font-size: 23px; color: #a0a0a0; }
.dlg-grid { display: grid; grid-template-columns: 159px 1fr; column-gap: 11px; grid-template-rows: 53px 45px 43px; row-gap: 17px; padding: 26px 65px 35px 0; align-items: center; }
.dlg-grid label { text-align: right; color: #a6a6a6; }
.name-box { position: relative; height: 53px; }
.name-box input { width: 100%; height: 100%; padding-left: 8px; border: 6px solid #3d6d98; border-radius: 12px; outline: 0; color: #e4e4e4; font-size: 23px; }
.caret { position: absolute; left: 185px; top: 13px; width: 3px; height: 28px; background: #3d82f0; }
.tags { margin-left: 5px; height: 45px; border: 1px solid #222; border-radius: 4px; }
.where-row { display: flex; gap: 15px; padding: 0 3px 0 5px; }
.dark-pick { position: relative; flex: 1; display: flex; align-items: center; height: 43px; background: #313131; border-radius: 9px; }
.dark-pick select { width: 100%; height: 100%; padding-left: 52px; }
.cloud { position: absolute; left: 20px; }
.expand { width: 42px; height: 43px; border-radius: 9px; background: #2e2e2e; display: grid; place-items: center; }
.dlg-format { display: flex; align-items: center; gap: 16px; height: 63px; padding: 0 114px 0 116px; border-top: 2px solid #333; border-bottom: 2px solid #333; }
.fmt { flex: 1; }
.fmt select { padding-left: 20px; }
.fmt svg { position: absolute; right: 16px; pointer-events: none; }
.dlg-actions { display: flex; justify-content: flex-end; gap: 14px; padding: 37px 33px 34px 0; }
.dbtn { width: 131px; height: 43px; border-radius: 9px; background: #313131; color: #e2e2e2; }
.dbtn.primary { background: #3b82f5; color: #fff; }
.pointer { position: absolute; left: 492px; top: 206px; }
```
